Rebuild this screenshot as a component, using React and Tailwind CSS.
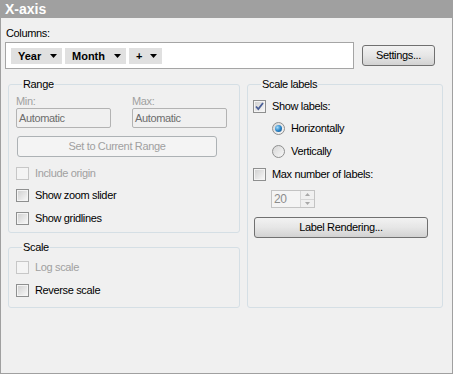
import React from "react";
import clsx from "clsx";

const Caret = () => (
  <svg width="7" height="4" viewBox="0 0 7 4" className="shrink-0">
    <path d="M0 0H7L3.5 4Z" fill="#000" />
  </svg>
);

const Chip = ({ label, width }) => (
  <div
    className={clsx(
      "h-[16px] bg-[#e0e0e0] flex items-center justify-between pl-[7px] pr-[5px] font-bold tracking-normal",
      width
    )}
  >
    <span>{label}</span>
    <Caret />
  </div>
);

const Check = ({ checked, disabled }) => (
  <span
    className={clsx(
      "w-[13px] h-[13px] border p-[1px] shrink-0 flex",
      disabled ? "border-[#c7c7c7] bg-[#f4f4f4]" : "border-[#8e8f8f] bg-[#f4f4f4]"
    )}
  >
    <span
      className={clsx(
        "flex-1 flex items-center justify-center",
        disabled ? "bg-[#f4f4f4]" : "bg-linear-to-br from-[#d2d2d2] to-[#f6f6f6]"
      )}
    >
      {checked && (
        <svg width="9" height="9" viewBox="0 0 9 9">
          <path d="M1 4.5L3.3 7L8 1" stroke="#4a5f97" strokeWidth="1.8" fill="none" />
        </svg>
      )}
    </span>
  </span>
);

const Radio = ({ checked }) => (
  <span className="w-[13px] h-[13px] rounded-full border border-[#8e8f8f] bg-linear-to-br from-[#d6d6d6] to-[#f8f8f8] flex items-center justify-center shrink-0">
    {checked && (
      <span className="w-[7px] h-[7px] rounded-full bg-radial-[at_35%_35%] from-[#a6dcfa] via-[#2b86c9] to-[#17497c]" />
    )}
  </span>
);

const Row = ({ children, disabled, className, label, checked, radio }) => (
  <div className={clsx("flex items-center h-[13px]", className)}>
    {radio ? <Radio checked={checked} /> : <Check checked={checked} disabled={disabled} />}
    <span className={clsx("ml-[6px]", disabled ? "text-[#a0a0a0]" : "text-black")}>{label}</span>
    {children}
  </div>
);

const Button = ({ children, className }) => (
  <button
    className={clsx(
      "h-[21px] rounded-[3px] border border-[#707070] bg-linear-to-b from-[#f2f2f2] via-[#e6e6e6] to-[#d2d2d2] text-black flex items-center justify-center",
      className
    )}
  >
    {children}
  </button>
);

const TextBox = ({ value }) => (
  <div className="h-[20px] border border-[#b3b3b3] rounded-[2px] bg-[#f0f0f0] flex items-center pl-[2px] text-[#6d6d6d]">
    {value}
  </div>
);

export default function App() {
  return (
    <div className="w-[453px] h-[374px] border border-[#a0a0a0] bg-[#f0f0f0] flex flex-col font-['Liberation_Sans',Arial,sans-serif] text-[11px] leading-[13px] tracking-[-0.35px] text-black">
      <div className="h-[17px] bg-[#a0a0a0] text-white font-bold text-[14px] leading-[17px] pl-[4px] tracking-normal">
        X-axis
      </div>

      <div className="mt-[9px] pl-[5px]">Columns:</div>

      <div className="mt-[2px] pl-[4px] flex items-center">
        <div className="w-[349px] h-[27px] border border-[#a5a5a5] bg-white flex items-start gap-[3px] pl-[5px] pt-[5px]">
          <Chip label="Year" width="w-[51px]" />
          <Chip label="Month" width="w-[61px]" />
          <Chip label="+" width="w-[33px]" />
        </div>
        <Button className="ml-[8px] w-[73px]">Settings...</Button>
      </div>

      <div className="mt-[9px] pl-[7px] flex gap-[7px]">
        <div className="w-[232px] flex flex-col">
          <fieldset className="border border-[#d5dfe5] rounded-[3px] pl-[7px] pb-[7px]">
            <legend className="ml-[6px] px-[1px]">Range</legend>
            <div className="mt-[4px] grid grid-cols-[95px_95px] gap-x-[21px]">
              <span className="text-[#a0a0a0]">Min:</span>
              <span className="text-[#a0a0a0]">Max:</span>
              <TextBox value="Automatic" />
              <TextBox value="Automatic" />
            </div>
            <div className="mt-[8px] ml-[1px] w-[200px] h-[21px] rounded-[3px] border border-[#adb2b5] bg-[#f4f4f4] text-[#a0a0a0] flex items-center justify-center">
              Set to Current Range
            </div>
            <Row className="mt-[10px]" disabled label="Include origin" />
            <Row className="mt-[9px]" label="Show zoom slider" />
            <Row className="mt-[10px]" label="Show gridlines" />
          </fieldset>

          <fieldset className="mt-[8px] border border-[#d5dfe5] rounded-[3px] pl-[7px] pb-[10px]">
            <legend className="ml-[6px] px-[1px]">Scale</legend>
            <Row className="mt-[7px]" disabled label="Log scale" />
            <Row className="mt-[10px]" label="Reverse scale" />
          </fieldset>
        </div>

        <fieldset className="w-[196px] border border-[#d5dfe5] rounded-[3px] pl-[5px]">
          <legend className="ml-[8px] px-[1px]">Scale labels</legend>
          <Row className="mt-[9px]" checked label="Show labels:" />
          <Row className="mt-[9px] ml-[19px]" radio checked label="Horizontally" />
          <Row className="mt-[10px] ml-[19px]" radio label="Vertically" />
          <Row className="mt-[10px]" label="Max number of labels:" />
          <div className="mt-[9px] ml-[18px] w-[44px] h-[18px] border border-[#c3c3c3] bg-[#f4f4f4] flex">
            <span className="flex-1 pl-[2px] text-[#8c8c8c] text-[12px] leading-[16px]">20</span>
            <div className="w-[14px] flex flex-col border-l border-[#d6d6d6]">
              <div className="flex-1 flex items-center justify-center border-b border-[#d6d6d6] bg-[#f0f0f0]">
                <svg width="5" height="3" viewBox="0 0 5 3">
                  <path d="M0 3H5L2.5 0Z" fill="#a8a8a8" />
                </svg>
              </div>
              <div className="flex-1 flex items-center justify-center bg-[#f0f0f0]">
                <svg width="5" height="3" viewBox="0 0 5 3">
                  <path d="M0 0H5L2.5 3Z" fill="#a8a8a8" />
                </svg>
              </div>
            </div>
          </div>
          <Button className="mt-[9px] ml-[1px] w-[174px] h-[20px]">Label Rendering...</Button>
        </fieldset>
      </div>
    </div>
  );
}
